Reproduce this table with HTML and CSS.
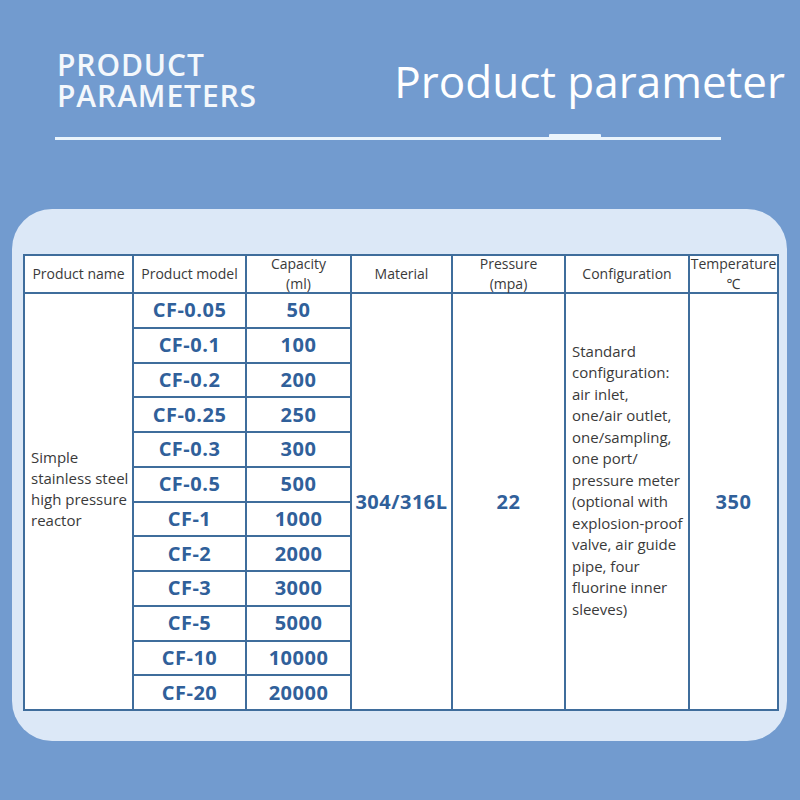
FILE: index.html
```html
<!DOCTYPE html>
<html>
<head>
<meta charset="utf-8">
<link rel="stylesheet" href="styles.css">
</head>
<body>
<div class="page">
  <header class="head">
    <div class="title-en">
      <div class="title-line">PRODUCT</div>
      <div class="title-line">PARAMETERS</div>
    </div>
    <div class="title-main">Product parameter</div>
  </header>
  <div class="rule">
    <span class="rule-line rule-left"></span>
    <span class="rule-bump"></span>
    <span class="rule-line rule-right"></span>
  </div>
  <section class="card">
    <table class="params">
      <colgroup>
        <col class="c1"><col class="c2"><col class="c3"><col class="c4"><col class="c5"><col class="c6"><col class="c7">
      </colgroup>
      <thead>
        <tr class="hrow">
          <th><div class="hcell">Product name</div></th>
          <th><div class="hcell">Product model</div></th>
          <th><div class="hcell"><span>Capacity</span><span>(ml)</span></div></th>
          <th><div class="hcell">Material</div></th>
          <th><div class="hcell"><span>Pressure</span><span>(mpa)</span></div></th>
          <th><div class="hcell">Configuration</div></th>
          <th><div class="hcell"><span>Temperature</span><span>℃</span></div></th>
        </tr>
      </thead>
      <tbody>
        <tr>
          <td rowspan="12" class="name">Simple<br>stainless steel<br>high pressure<br>reactor</td>
          <td class="val">CF-0.05</td><td class="val">50</td>
          <td rowspan="12" class="val">304/316L</td>
          <td rowspan="12" class="val">22</td>
          <td rowspan="12" class="config">Standard<br>configuration:<br>air inlet,<br>one/air outlet,<br>one/sampling,<br>one port/<br>pressure meter<br>(optional with<br>explosion-proof<br>valve, air guide<br>pipe, four<br>fluorine inner<br>sleeves)</td>
          <td rowspan="12" class="val">350</td>
        </tr>
        <tr><td class="val">CF-0.1</td><td class="val">100</td></tr>
        <tr><td class="val">CF-0.2</td><td class="val">200</td></tr>
        <tr><td class="val">CF-0.25</td><td class="val">250</td></tr>
        <tr><td class="val">CF-0.3</td><td class="val">300</td></tr>
        <tr><td class="val">CF-0.5</td><td class="val">500</td></tr>
        <tr><td class="val">CF-1</td><td class="val">1000</td></tr>
        <tr><td class="val">CF-2</td><td class="val">2000</td></tr>
        <tr><td class="val">CF-3</td><td class="val">3000</td></tr>
        <tr><td class="val">CF-5</td><td class="val">5000</td></tr>
        <tr><td class="val">CF-10</td><td class="val">10000</td></tr>
        <tr><td class="val">CF-20</td><td class="val">20000</td></tr>
      </tbody>
    </table>
  </section>
</div>
</body>
</html>
```
FILE: styles.css
```css
html, body {
  margin: 0;
  padding: 0;
}
body {
  background: #729bcf;
  font-family: "Open Sans", "Noto Sans", sans-serif;
  width: 800px;
  height: 800px;
  overflow: hidden;
}
.page {
  width: 800px;
}
.head {
  display: flex;
  justify-content: space-between;
  align-items: flex-start;
  padding: 49px 15px 0 57px;
}
.title-en {
  color: #f4f8fc;
  font-size: 30px;
  font-weight: 600;
  letter-spacing: 0.9px;
}
.title-line {
  height: 31px;
  line-height: 31px;
}
.title-main {
  color: #ffffff;
  font-size: 44px;
  font-weight: 400;
  line-height: 50px;
  margin-top: 7px;
}
.rule {
  display: flex;
  align-items: flex-end;
  margin: 23px 0 0 55px;
  width: 666px;
}
.rule-line {
  height: 3px;
  background: #eaf4fc;
}
.rule-left {
  width: 494px;
}
.rule-bump {
  width: 52px;
  height: 6px;
  background: #eaf4fc;
  border-radius: 1px 1px 0 0;
}
.rule-right {
  flex: 1;
}
.card {
  margin: 69px 13px 0 12px;
  padding: 45px 10px 30px 11px;
  background: #dce8f7;
  border-radius: 40px;
}
.params {
  width: 754px;
  table-layout: fixed;
  border-collapse: collapse;
  background: #ffffff;
  border: 2px solid #3f6d9c;
}
.c1 { width: 109px; }
.c2 { width: 113px; }
.c3 { width: 105px; }
.c4 { width: 101px; }
.c5 { width: 113px; }
.c6 { width: 124px; }
.c7 { width: 89px; }
.params th,
.params td {
  border: 2px solid #3f6d9c;
  padding: 0;
  text-align: center;
  vertical-align: middle;
}
.params th {
  font-size: 14px;
  font-weight: 400;
  color: #3a3a3a;
}
.hcell {
  height: 36px;
  display: flex;
  flex-direction: column;
  justify-content: center;
  align-items: center;
  line-height: 20px;
  white-space: nowrap;
}
.params tbody td {
  height: 32.75px;
}
.params td.val {
  font-size: 20px;
  font-weight: 700;
  letter-spacing: 0.5px;
  color: #30609a;
  line-height: 24px;
}
.params td.name {
  text-align: left;
  font-size: 15px;
  line-height: 21px;
  color: #3a3a3a;
  padding: 0 0 26px 6px;
  white-space: nowrap;
}
.params td.config {
  text-align: left;
  font-size: 15px;
  line-height: 21.5px;
  color: #3a3a3a;
  padding: 0 0 42px 6px;
  white-space: nowrap;
}
```
